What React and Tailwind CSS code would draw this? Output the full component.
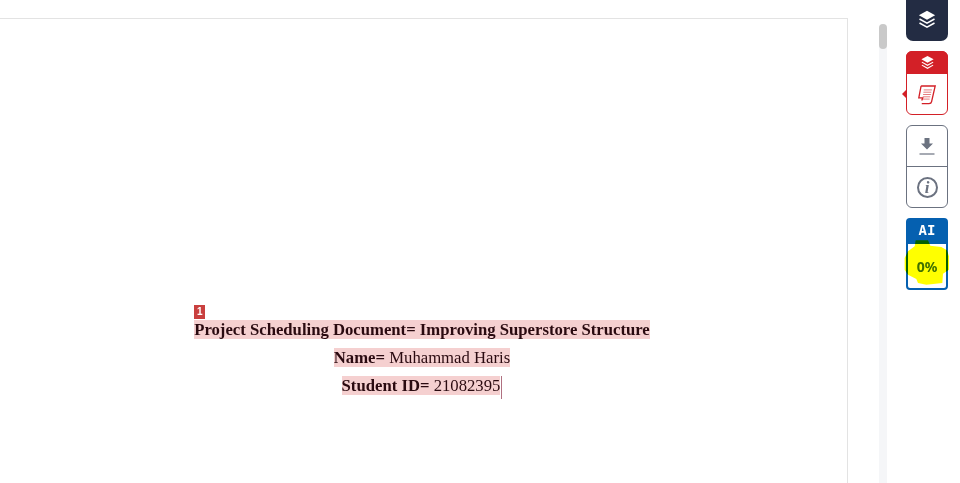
import React from 'react';

// Layers glyph: solid top diamond with two chevrons below
const LayersIcon = ({ className }) => (
  <svg viewBox="0 0 16 16" className={className} fill="none">
    <path d="M8 1 L14.5 4.6 L8 8.2 L1.5 4.6 Z" fill="currentColor" />
    <path d="M2 7.6 L8 11 L14 7.6" stroke="currentColor" strokeWidth="1.2" />
    <path d="M2 10.8 L8 14.2 L14 10.8" stroke="currentColor" strokeWidth="1.2" />
  </svg>
);

const DocIcon = () => (
  <svg viewBox="172 250 60 64" className="w-[20px] h-[21px] text-[#d32027]" fill="none" stroke="currentColor">
    <path d="M184 256 H227 L216 304 Q215 310 208 310 H186" strokeWidth="4" />
    <path d="M184 256 L177 292 H189 L186 300" strokeWidth="4" />
    <path d="M192 268 H217 M191 275 H215 M190 282 H214 M189 289 H212 M188 296 H210" strokeWidth="3" opacity="0.6" />
  </svg>
);

const DownloadIcon = () => (
  <svg viewBox="0 0 18 20" className="w-[18px] h-[20px] text-[#6b7280]" fill="none">
    <path d="M6.5 2 H11.5 V7.5 H15 L9 13.5 L3 7.5 H6.5 Z" fill="currentColor" />
    <path d="M1.5 18 H16.5" stroke="currentColor" strokeWidth="1.2" />
  </svg>
);

const InfoIcon = () => (
  <div className="w-[21px] h-[21px] rounded-full border-2 border-[#6b7280] flex items-center justify-center font-['Liberation_Serif',serif] italic font-bold text-[17px] leading-none text-[#6b7280]">
    i
  </div>
);

const Highlight = ({ children }) => (
  <span className="bg-[#f5d0d0] text-[#2a0a10]">{children}</span>
);

const App = () => {
  return (
    <div className="relative flex w-[960px] h-[483px] overflow-hidden bg-white">
      {/* Document page */}
      <div className="w-[848px] shrink-0 pt-[18px]">
        <div className="h-full border-t border-r border-[#e3e3e3] pt-[297px] pl-[100px] pr-[103px]">
          <div className="font-['Liberation_Serif',serif] text-[16.7px] leading-[28px] text-center">
            <div>
              <span className="relative inline-block">
                <span className="absolute left-0 -top-[11px] w-[11px] h-[14px] bg-[#c9403f] text-white font-['Liberation_Sans',sans-serif] font-bold text-[10px] leading-[14px] text-center">
                  1
                </span>
                <Highlight><b>Project Scheduling Document= Improving Superstore Structure</b></Highlight>
              </span>
            </div>
            <div>
              <Highlight><b>Name=</b> Muhammad Haris</Highlight>
            </div>
            <div>
              <Highlight><b>Student ID=</b> 21082395</Highlight>
              <span className="inline-block w-px h-[23px] bg-[#b07080] align-middle ml-px" />
            </div>
          </div>
        </div>
      </div>

      {/* Scrollbar */}
      <div className="ml-[31px] w-[8px] shrink-0 pt-[24px]">
        <div className="h-full bg-[#f5f6f8] rounded-t-full">
          <div className="h-[25px] rounded-full bg-[#c9c9c9]" />
        </div>
      </div>

      {/* Side buttons */}
      <div className="ml-[19px] w-[42px] shrink-0 flex flex-col">
        <div className="h-[41px] rounded-b-[7px] bg-[#232c43] flex items-center justify-center text-white pb-[3px]">
          <LayersIcon className="w-[20px] h-[21px]" />
        </div>

        <div className="relative mt-[10px] h-[64px] rounded-[6px] border border-[#d32027] flex flex-col">
          <div className="h-[23px] -m-px mb-0 rounded-t-[6px] bg-[#d32027] flex items-center justify-center text-white">
            <LayersIcon className="w-[15px] h-[17px]" />
          </div>
          <div className="flex-1 flex items-center justify-center">
            <DocIcon />
          </div>
          <div className="absolute -left-[5px] top-[38px] w-0 h-0 border-y-[4px] border-y-transparent border-r-[4px] border-r-[#d32027]" />
        </div>

        <div className="mt-[10px] h-[83px] rounded-[6px] border border-[#6b7280] flex flex-col">
          <div className="h-[41px] border-b border-[#6b7280] flex items-center justify-center">
            <DownloadIcon />
          </div>
          <div className="flex-1 flex items-center justify-center">
            <InfoIcon />
          </div>
        </div>

        <div className="relative mt-[10px] h-[72px] rounded-[4px] border-2 border-[#0560b0] flex flex-col">
          <div className="h-[24px] bg-[#0560b0] text-white font-['DejaVu_Sans_Mono',monospace] font-bold text-[14px] leading-[21px] text-center">
            AI
          </div>
          <div className="flex-1 flex items-center justify-center font-['Noto_Sans',sans-serif] font-bold text-[14px] text-[#3f70b0]">
            0%
          </div>
          {/* Yellow marker blob multiplies over the badge */}
          <svg viewBox="130 355 145 145" className="absolute left-[-4.67px] top-[18.33px] w-[48.33px] h-[48.33px] mix-blend-multiply">
            <path d="M168 362 L205 362 L212 378 L245 382 L262 392 L268 410 L268 450 L250 462 L248 490 L200 495 L175 490 L170 478 L145 465 L135 450 L135 415 L145 395 L165 380 Z" fill="#ffff00" />
          </svg>
        </div>
      </div>
    </div>
  );
};

export default App;
